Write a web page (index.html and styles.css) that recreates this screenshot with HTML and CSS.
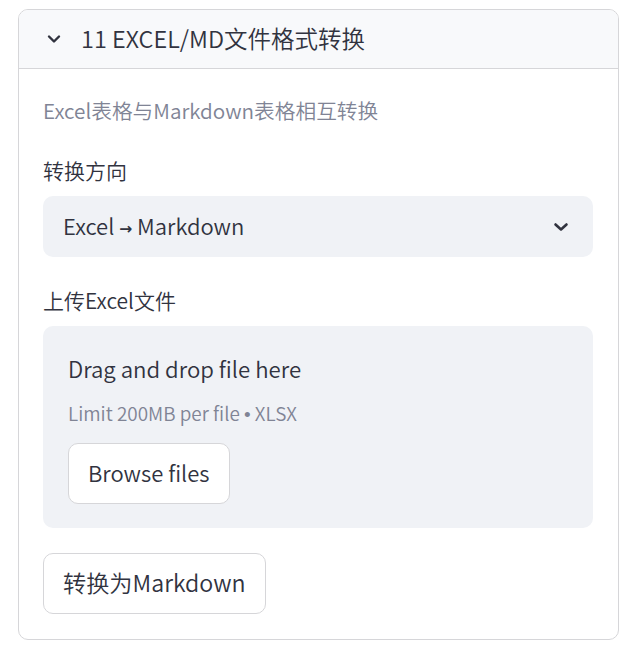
FILE: index.html
```html
<!DOCTYPE html>
<html lang="zh">
<head>
<meta charset="utf-8">
<link rel="stylesheet" href="styles.css">
</head>
<body>
<div class="page">
  <div class="expander">
    <div class="exp-header">
      <svg class="chev" width="14" height="10" viewBox="0 0 14 10"><path d="M2 2.5 L7 7.5 L12 2.5" fill="none" stroke="#31333f" stroke-width="2.4" stroke-linecap="round" stroke-linejoin="round"/></svg>
      <span class="exp-title">11 EXCEL/MD文件格式转换</span>
    </div>
    <div class="exp-body">
      <div class="caption">Excel表格与Markdown表格相互转换</div>
      <div class="label label-first">转换方向</div>
      <div class="select">
        <span class="select-value">Excel <span class="arrow">→</span> Markdown</span>
        <svg class="chev" width="16" height="10" viewBox="0 0 16 10"><path d="M2.5 2.5 L8 7.5 L13.5 2.5" fill="none" stroke="#31333f" stroke-width="2.6" stroke-linecap="round" stroke-linejoin="round"/></svg>
      </div>
      <div class="label label-second">上传Excel文件</div>
      <div class="dropzone">
        <div class="dz-title">Drag and drop file here</div>
        <div class="dz-sub">Limit 200MB per file <span class="bullet">•</span> XLSX</div>
        <button class="btn btn-browse">Browse files</button>
      </div>
      <button class="btn btn-convert">转换为Markdown</button>
    </div>
  </div>
</div>
</body>
</html>
```
FILE: styles.css
```css
* { box-sizing: border-box; }
html, body { margin: 0; padding: 0; background: #ffffff; }
body {
  font-family: "Noto Sans CJK SC", "Noto Sans", sans-serif;
  font-weight: 350;
  color: #31333f;
}
.page { padding: 9px 10px 0 18px; }
.expander {
  border: 1px solid #d6d6d9;
  border-radius: 10px;
  overflow: hidden;
  height: 631px;
}
.exp-header {
  height: 59px;
  background: #f8f9fb;
  border-bottom: 1px solid #d6d6d9;
  display: flex;
  align-items: center;
  padding-left: 28px;
}
.exp-header .chev { margin-right: 20px; }
.exp-title { font-size: 23.5px; line-height: 1; }
.exp-body { padding: 0 25px 0 24px; display: flex; flex-direction: column; align-items: flex-start; }
.caption {
  margin-top: 28px;
  font-size: 20.7px;
  line-height: 26px;
  color: #808495;
}
.label { font-size: 21px; line-height: 26px; }
.label-first { margin-top: 34px; }
.select {
  margin-top: 13px;
  width: 100%;
  height: 61px;
  background: #f0f2f6;
  border-radius: 10px;
  display: flex;
  align-items: center;
  justify-content: space-between;
  padding: 0 24px 3px 20px;
  font-size: 22px;
}
.select .chev { margin-top: 3px; }
.arrow { font-family: "DejaVu Sans", sans-serif; font-weight: bold; font-size: 15.5px; position: relative; top: -1px; }
.label-second { margin-top: 30px; }
.dropzone {
  margin-top: 13px;
  width: 100%;
  height: 202px;
  background: #f0f2f6;
  border-radius: 10px;
  padding: 26px 25px 0 25px;
  display: flex;
  flex-direction: column;
  align-items: flex-start;
}
.dz-title { font-size: 22.2px; line-height: 32px; }
.dz-sub { font-size: 18.9px; line-height: 26px; color: #808495; margin-top: 16px; }
.bullet { font-family: "Liberation Sans", sans-serif; }
.btn {
  font-family: inherit;
  font-weight: inherit;
  color: #31333f;
  background: #ffffff;
  border: 1px solid #d6d6d9;
  border-radius: 10px;
  height: 61px;
  font-size: 22px;
  line-height: 1;
  padding: 0 19px 3px;
}
.btn-browse { margin-top: 15px; }
.btn-convert { margin-top: 25px; font-size: 23.2px; padding-bottom: 1px; }
```
